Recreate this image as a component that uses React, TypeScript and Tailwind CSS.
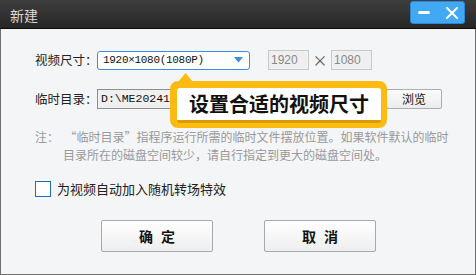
import React from "react";

const cjk = { fontFamily: '"Microsoft YaHei", "Noto Sans CJK SC", sans-serif' };
const mono = { fontFamily: '"NSimSun", "Liberation Mono", "Noto Sans CJK SC", monospace' };

export default function App() {
  return (
    <div className="relative w-[476px] h-[275px] flex flex-col overflow-hidden bg-[#2a2a2a]" style={cjk}>
      {/* Title bar */}
      <div className="h-[29px] flex items-start justify-between bg-gradient-to-b from-[#3e3e3e] to-[#262626] border-b border-[#0c0c0c] shrink-0">
        <span className="ml-[10px] mt-[8px] text-[14px] text-[#d8d8d8] leading-none">新建</span>
        <div className="mr-[11px] mt-[1px] w-[55px] h-[23px] rounded-[3px] bg-[#41a8f4] border border-[#2f86d0] flex items-center">
          <div className="ml-[7px] w-[12px] h-[3px] rounded-full bg-white" />
          <svg className="ml-[16px]" width="12" height="12" viewBox="0 0 12 12">
            <path d="M1 1 L11 11 M11 1 L1 11" stroke="white" strokeWidth="2" strokeLinecap="square" />
          </svg>
        </div>
      </div>
      {/* Body */}
      <div className="flex-1 bg-[#f4f5f7] border-x border-b border-[#6f6f6f] flex flex-col pl-[34px]">
        {/* Row 1 */}
        <div className="mt-[21px] h-[20px] flex items-center">
          <span className="w-[62px] shrink-0 whitespace-nowrap text-[12.5px] text-[#222]">视频尺寸：</span>
          <div className="w-[153px] shrink-0 h-[19px] rounded-[3px] border border-[#3a8ee8] bg-white flex items-center justify-between pl-[5px] pr-[6px]">
            <span className="text-[11px] text-[#111] leading-none whitespace-nowrap tracking-[-0.3px]" style={mono}>1920×1080(1080P)</span>
            <svg width="9" height="6" viewBox="0 0 9 6"><path d="M0 0 H9 L4.5 5.5 Z" fill="#3c8fe0" /></svg>
          </div>
          <div className="ml-[18px] w-[41px] h-[20px] border border-[#c9c9c9] bg-[#efefef] flex items-center pl-[2px] text-[12px] text-[#888]" style={{ fontFamily: '"Liberation Sans", Arial, sans-serif' }}>1920</div>
          <span className="w-[22px] text-center text-[15px] text-[#555]">×</span>
          <div className="w-[41px] h-[20px] border border-[#c9c9c9] bg-[#efefef] flex items-center pl-[2px] text-[12px] text-[#888]" style={{ fontFamily: '"Liberation Sans", Arial, sans-serif' }}>1080</div>
        </div>
        {/* Row 2 */}
        <div className="mt-[19px] h-[20px] flex items-center">
          <span className="w-[62px] shrink-0 whitespace-nowrap text-[12.5px] text-[#222]">临时目录：</span>
          <div className="w-[285px] shrink-0 h-[20px] border border-[#8e8e8e] bg-[#f0f0f0] flex items-center pl-[3px] text-[11.5px] text-[#111]" style={mono}>D:\ME2024112</div>
          <div className="ml-[4px] w-[56px] h-[20px] border border-[#adadad] rounded-[2px] bg-gradient-to-b from-[#fbfbfb] to-[#ececec] flex items-center justify-center text-[12px] text-[#111]">浏览</div>
        </div>
        {/* Note */}
        <div className="mt-[19px] text-[12px] leading-[18px] text-[#9a9a9a] whitespace-nowrap">
          <div>注：&nbsp;&nbsp;“临时目录”指程序运行所需的临时文件摆放位置。如果软件默认的临时</div>
          <div className="pl-[28px]">目录所在的磁盘空间较少，请自行指定到更大的磁盘空间处。</div>
        </div>
        {/* Checkbox */}
        <div className="mt-[17px] h-[16px] flex items-center">
          <div className="w-[16px] h-[16px] border border-[#1f6fbf] bg-white" />
          <span className="ml-[6px] text-[13px] text-[#222]">为视频自动加入随机转场特效</span>
        </div>
        {/* Buttons */}
        <div className="mt-[23px] flex pl-[66px] gap-[51px]">
          <div className="w-[112px] h-[32px] border border-[#a9a9a9] rounded-[2px] bg-gradient-to-b from-[#ffffff] to-[#eeeeee] flex items-center justify-center text-[14px] font-bold text-[#111] tracking-[8px] pl-[8px]">确定</div>
          <div className="w-[112px] h-[32px] border border-[#a9a9a9] rounded-[2px] bg-gradient-to-b from-[#ffffff] to-[#eeeeee] flex items-center justify-center text-[14px] font-bold text-[#111] tracking-[8px] pl-[8px]">取消</div>
        </div>
      </div>
      {/* Tooltip */}
      <div className="absolute left-[170px] top-[73px]">
        <svg className="absolute left-[8px] top-0" width="15" height="9" viewBox="0 0 15 9"><path d="M7.5 0 L15 9 H0 Z" fill="#fbbb12" /></svg>
        <div className="mt-[8px] w-[217px] h-[47px] rounded-[8px] bg-[#fbbb12] pt-[7px] pl-[7px]">
          <div className="w-[204px] h-[35px] bg-white border-b-[3px] border-[#d99c05] rounded-[3px] flex items-center justify-center text-[20px] font-bold text-[#111] leading-none">
            设置合适的视频尺寸
          </div>
        </div>
      </div>
    </div>
  );
}
